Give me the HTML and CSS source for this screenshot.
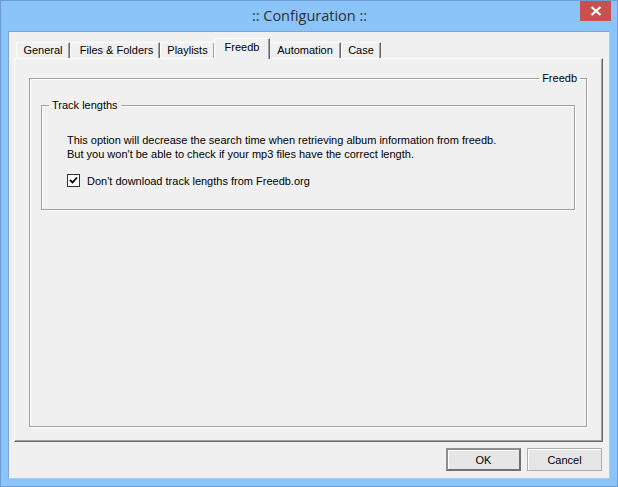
FILE: index.html
```html
<!DOCTYPE html>
<html lang="en">
<head>
    <meta charset="UTF-8">
    <title>:: Configuration ::</title>
    <link rel="stylesheet" href="styles.css">
</head>
<body>

    <div class="window">
        <div class="titlebar">
            <span class="title">:: Configuration ::</span>
            <span class="close">
                <svg width="12" height="10" viewBox="0 0 12 10">
                    <path d="M1.5 1 L10.5 9 M10.5 1 L1.5 9" stroke="#fff" stroke-width="2.2"/>
                </svg>
            </span>
        </div>

        <div class="client">
            <div class="tabs">
                <div class="tab t-general">General</div>
                <div class="tab t-files">Files &amp; Folders</div>
                <div class="tab t-playlists">Playlists</div>
                <div class="tab active t-freedb">Freedb</div>
                <div class="tab t-automation">Automation</div>
                <div class="tab t-case">Case</div>
            </div>

            <div class="panel">
                <fieldset class="group outer">
                    <legend class="legend-right">Freedb</legend>

                    <fieldset class="group inner">
                        <legend>Track lengths</legend>
                        <p class="info">This option will decrease the search time when retrieving album information from freedb.<br>
                        But you won't be able to check if your mp3 files have the correct length.</p>
                        <label class="check">
                            <span class="box">
                                <svg width="9" height="9" viewBox="0 0 9 9">
                                    <path d="M1 4 L3.5 6.5 L8 1.5" stroke="#000" stroke-width="1.8" fill="none"/>
                                </svg>
                            </span>
                            Don't download track lengths from Freedb.org
                        </label>
                    </fieldset>
                </fieldset>
            </div>

            <div class="buttons">
                <button class="btn ok">OK</button>
                <button class="btn cancel">Cancel</button>
            </div>
        </div>
    </div>

</body>
</html>
```

FILE: styles.css
```css
* {
    box-sizing: border-box;
}

body {
    margin: 0;
    width: 618px;
    height: 487px;
    font-family: Tahoma, "Liberation Sans", sans-serif;
    font-size: 11px;
    color: #000;
    overflow: hidden;
}

.window {
    width: 618px;
    height: 487px;
    background-color: #8bc4f8;
    border: 1px solid #6c9ed3;
    padding: 0 7px 7px 7px;
    display: flex;
    flex-direction: column;
}

.titlebar {
    height: 30px;
    display: flex;
    align-items: flex-start;
}

.title {
    flex: 1;
    text-align: center;
    padding: 5px 0 0 31px;
    font-family: "Segoe UI", "Open Sans", sans-serif;
    font-size: 14.5px;
    color: #2b3036;
}

.close {
    width: 31px;
    height: 20px;
    margin-right: -1px;
    background-color: #c75050;
    display: flex;
    align-items: center;
    justify-content: center;
}

.client {
    flex: 1;
    background-color: #f0f0f0;
    border: 1px solid #7aa7d6;
    border-right-color: #a7cdf2;
    border-bottom-color: #a7cdf2;
    padding: 6px 6px 6px 5px;
    display: flex;
    flex-direction: column;
}

.tabs {
    display: flex;
    align-items: flex-end;
    height: 20px;
    padding-left: 2px;
    position: relative;
    z-index: 1;
}

.tab {
    height: 16px;
    padding-top: 1px;
    text-align: center;
    border-top: 1px solid #fff;
    border-left: 1px solid #fff;
    border-right: 1px solid #696969;
    box-shadow: inset -1px 0 0 #a0a0a0;
    background-color: #f0f0f0;
}

.t-general { width: 54px; }
.t-files { width: 90px; padding-left: 3px; }
.t-playlists { width: 55px; }
.t-automation { width: 72px; }
.t-case { width: 40px; }

.tab.active {
    width: 56px;
    height: 21px;
    margin: 0 -1px -1px -1px;
    padding-top: 2px;
    position: relative;
}

.panel {
    height: 384px;
    border-top: 1px solid #fff;
    border-left: 1px solid #fff;
    border-right: 1px solid #696969;
    border-bottom: 1px solid #696969;
    box-shadow: inset -1px -1px 0 #a0a0a0;
    padding: 13px 15px 16px 14px;
}

.group {
    margin: 0;
    border: 1px solid #a0a0a0;
    box-shadow: 1px 1px 0 #fff, inset 1px 1px 0 #fff;
}

.group legend {
    padding: 0 3px;
    line-height: 13px;
}

.outer {
    height: 355px;
    padding: 14px 11px 0 11px;
}

.legend-right {
    margin-left: auto;
    margin-right: -5px;
}

.inner {
    height: 111px;
    padding: 21px 10px 0 25px;
}

.inner legend {
    margin-left: -18px;
}

.info {
    margin: 0;
    line-height: 14px;
}

.check {
    display: flex;
    align-items: center;
    gap: 7px;
    margin-top: 13px;
}

.box {
    width: 13px;
    height: 13px;
    border: 1px solid #333;
    background-color: #fff;
    display: flex;
    align-items: center;
    justify-content: center;
}

.buttons {
    display: flex;
    justify-content: flex-end;
    gap: 6px;
    margin-top: 6px;
    padding-right: 1px;
}

.btn {
    height: 23px;
    font-family: inherit;
    font-size: 11px;
    color: #000;
    background-color: #e6e6e6;
    border: 1px solid #adadad;
    box-shadow: inset 1px 1px 0 #fff;
    padding: 0;
}

.ok {
    width: 75px;
    border: 2px solid #707070;
    border-top-color: #8f8f8f;
    border-left-color: #8f8f8f;
}

.cancel {
    width: 75px;
}
```
